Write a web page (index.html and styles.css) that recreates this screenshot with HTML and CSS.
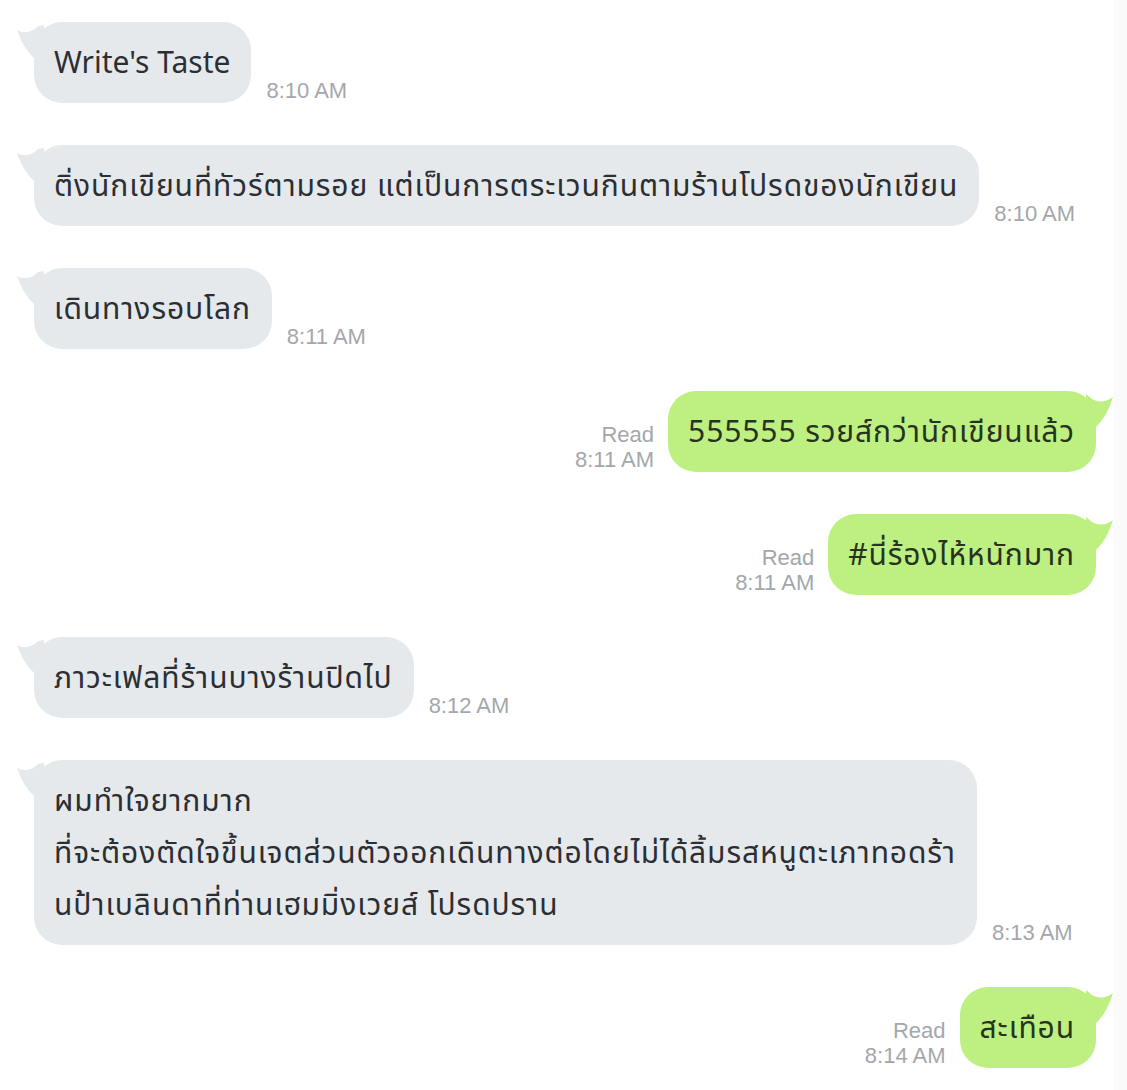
FILE: index.html
```html
<!DOCTYPE html>
<html lang="th">
<head>
<meta charset="utf-8">
<title>Chat</title>
<link rel="stylesheet" href="styles.css">
</head>
<body>
<div class="chat">
  <div class="row in">
    <div class="bubble latin">Write's Taste<svg class="tail" viewBox="0 0 28 36"><path d="M1 8 Q12 14 22 4 L28 3 L28 36 L18 36 Q7 26 1 8 Z"/></svg></div>
    <div class="meta"><span>8:10 AM</span></div>
  </div>
  <div class="row in">
    <div class="bubble">ติ่งนักเขียนที่ทัวร์ตามรอย แต่เป็นการตระเวนกินตามร้านโปรดของนักเขียน<svg class="tail" viewBox="0 0 28 36"><path d="M1 8 Q12 14 22 4 L28 3 L28 36 L18 36 Q7 26 1 8 Z"/></svg></div>
    <div class="meta"><span>8:10 AM</span></div>
  </div>
  <div class="row in">
    <div class="bubble">เดินทางรอบโลก<svg class="tail" viewBox="0 0 28 36"><path d="M1 8 Q12 14 22 4 L28 3 L28 36 L18 36 Q7 26 1 8 Z"/></svg></div>
    <div class="meta"><span>8:11 AM</span></div>
  </div>
  <div class="row out">
    <div class="meta"><span>Read</span><span>8:11 AM</span></div>
    <div class="bubble">555555 รวยส์กว่านักเขียนแล้ว<svg class="tail" viewBox="0 0 28 36"><path d="M27 6 Q16 14 6 8 L0 3 L0 36 L10 36 Q21 26 27 6 Z"/></svg></div>
  </div>
  <div class="row out">
    <div class="meta"><span>Read</span><span>8:11 AM</span></div>
    <div class="bubble">#นี่ร้องไห้หนักมาก<svg class="tail" viewBox="0 0 28 36"><path d="M27 6 Q16 14 6 8 L0 3 L0 36 L10 36 Q21 26 27 6 Z"/></svg></div>
  </div>
  <div class="row in">
    <div class="bubble">ภาวะเฟลที่ร้านบางร้านปิดไป<svg class="tail" viewBox="0 0 28 36"><path d="M1 8 Q12 14 22 4 L28 3 L28 36 L18 36 Q7 26 1 8 Z"/></svg></div>
    <div class="meta"><span>8:12 AM</span></div>
  </div>
  <div class="row in">
    <div class="bubble">ผมทำใจยากมาก<br>ที่จะต้องตัดใจขึ้นเจตส่วนตัวออกเดินทางต่อโดยไม่ได้ลิ้มรสหนูตะเภาทอดร้า<br>นป้าเบลินดาที่ท่านเฮมมิ่งเวยส์ โปรดปราน<svg class="tail" viewBox="0 0 28 36"><path d="M1 8 Q12 14 22 4 L28 3 L28 36 L18 36 Q7 26 1 8 Z"/></svg></div>
    <div class="meta"><span>8:13 AM</span></div>
  </div>
  <div class="row out">
    <div class="meta"><span>Read</span><span>8:14 AM</span></div>
    <div class="bubble">สะเทือน<svg class="tail" viewBox="0 0 28 36"><path d="M27 6 Q16 14 6 8 L0 3 L0 36 L10 36 Q21 26 27 6 Z"/></svg></div>
  </div>
</div>
</body>
</html>
```

FILE: styles.css
```css
html, body {
  margin: 0;
  padding: 0;
  background: #ffffff;
}
body {
  width: 1127px;
  height: 1090px;
  overflow: hidden;
  background: linear-gradient(to right, #ffffff 0, #ffffff 1114px, #fafafa 1114px);
}
.chat {
  display: flex;
  flex-direction: column;
  gap: 42px;
  padding: 22px 31px 0 34px;
  font-family: "Noto Sans Thai", "Noto Sans Thai UI", "Noto Sans", "DejaVu Sans", sans-serif;
}
.row {
  display: flex;
  align-items: flex-end;
}
.row.out {
  justify-content: flex-end;
}
.bubble {
  position: relative;
  padding: 16px 21px 13px 20px;
  line-height: 52px;
  font-size: 30px;
  letter-spacing: 0.9px;
  border-radius: 28px;
  white-space: nowrap;
}
.bubble.latin {
  letter-spacing: 0;
}
.in .bubble {
  background: #e6e9ec;
  color: #2b2f34;
}
.out .bubble {
  background: #bef081;
  color: #26331f;
}
.tail {
  position: absolute;
  top: 0;
  width: 28px;
  height: 36px;
}
.in .tail {
  left: -18px;
  fill: #e6e9ec;
}
.out .tail {
  right: -18px;
  fill: #bef081;
}
.meta {
  display: flex;
  flex-direction: column;
  font-family: "Liberation Sans", Arial, sans-serif;
  font-size: 22px;
  line-height: 25px;
  color: #a3a7ac;
  padding-bottom: 0;
}
.in .meta {
  margin-left: 15px;
  align-items: flex-start;
}
.out .meta {
  margin-right: 14px;
  align-items: flex-end;
}
```
